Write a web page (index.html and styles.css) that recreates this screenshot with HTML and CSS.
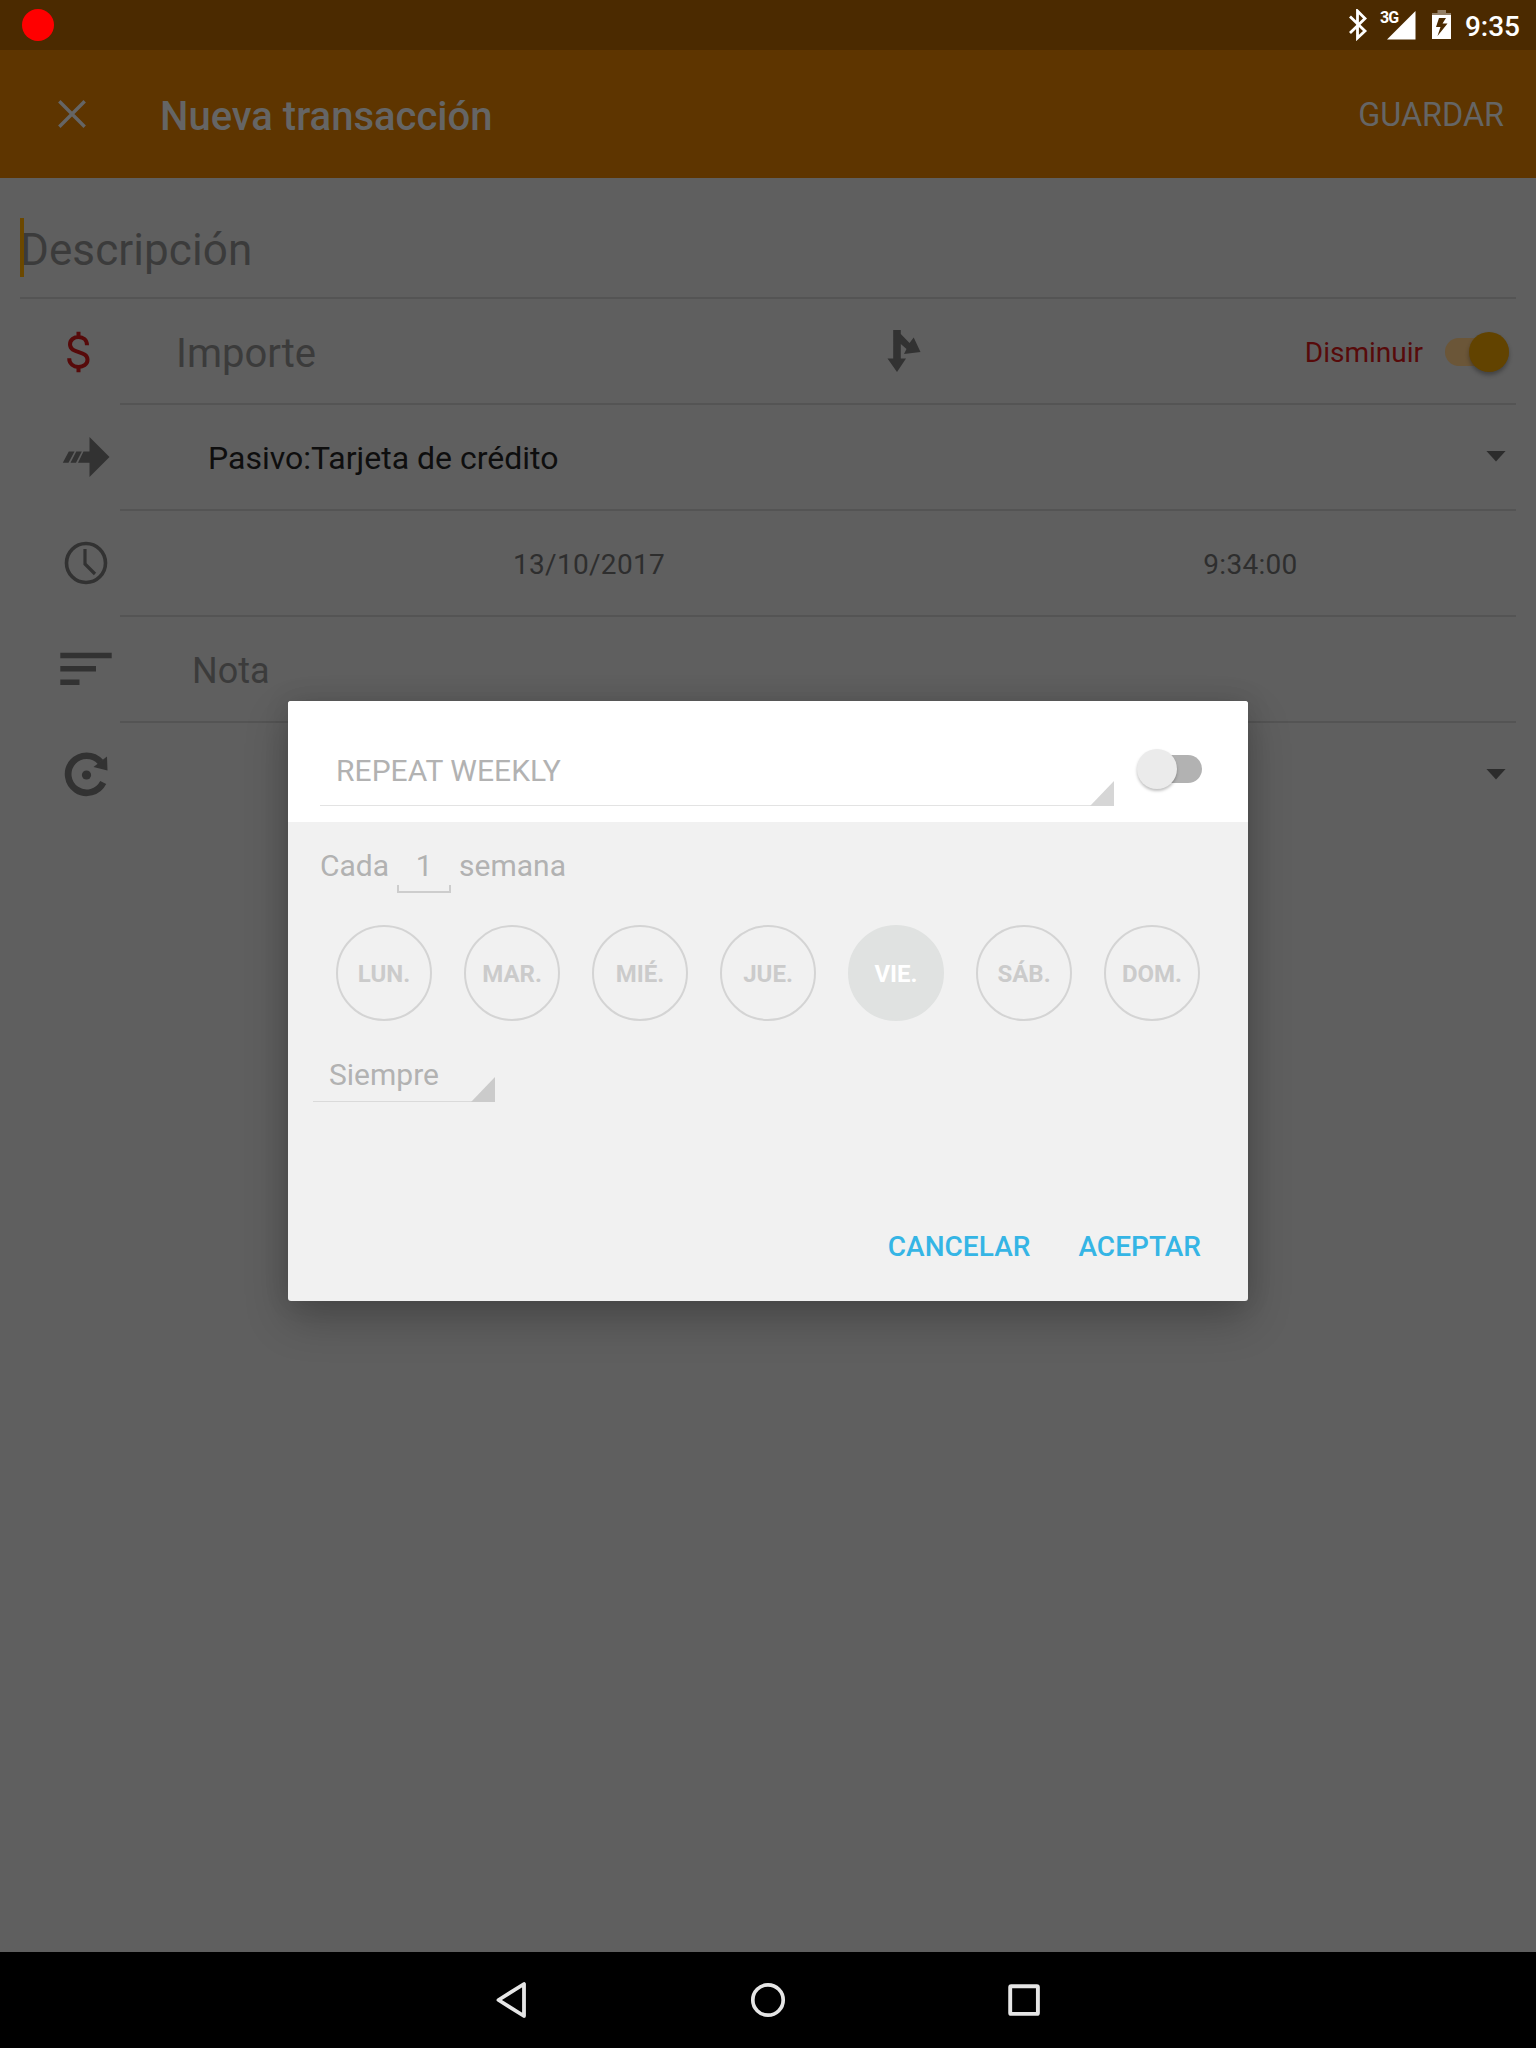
FILE: index.html
```html
<!DOCTYPE html>
<html lang="es">
<head>
<meta charset="utf-8">
<title>Nueva transacción</title>
<link rel="stylesheet" href="styles.css">
</head>
<body>
<div class="screen">
  <header class="status">
    <span class="record"></span>
    <div class="status-icons">
      <svg class="bluetooth" width="20" height="32" viewBox="0 0 20 32"><path d="M2 7.500 17 22 9.500 29V2L17 9.500 2 24" fill="none" stroke="#fff" stroke-width="2.800"/></svg>
      <div class="signal"><span class="signal-type">3G</span><svg width="29" height="29" viewBox="0 0 29 29"><path d="M28.500 0V28.500H0Z" fill="#fff"/></svg></div>
      <svg class="battery" width="20" height="30" viewBox="0 0 20 30"><path d="M5.500 0H14V3H19V6H0V3H5.500Z" fill="#937f66"/><path fill-rule="evenodd" d="M0 5H19V29H0ZM7 8 4 17H8.500L5.500 26 15.500 13.500H10.500L14 8Z" fill="#fff"/></svg>
      <span class="time">9:35</span>
    </div>
  </header>
  <div class="appbar">
    <svg class="close" width="28" height="28" viewBox="0 0 28 28"><path d="M1.300 1.300 26.700 26.700M26.700 1.300 1.300 26.700" stroke="#656565" stroke-width="3.400"/></svg>
    <h1 class="title">Nueva transacción</h1>
    <span class="save">GUARDAR</span>
  </div>
  <main class="form">
    <div class="description"><span class="caret"></span><span class="hint">Descripción</span></div>
    <div class="row">
      <div class="icon"><svg width="52" height="52" viewBox="0 0 52 52"><path d="M26 6V12M26 40V46.500M34.500 19.500C34.500 8 17.500 9 17.500 18.500C17.500 28.500 35 24 35 34C35 43.500 16.700 44 16.700 32.500" transform="translate(-7.500 .8)" fill="none" stroke="#570a0a" stroke-width="4"/></svg></div>
      <div class="cell amount">
        <span class="importe">Importe</span>
        <svg class="split" width="34" height="42" viewBox="0 0 34 42"><path d="M6.200 0H13.800V4L22.500 13 26.700 7.500 33.500 22 17 24 19.500 19 13.800 14V28.500H19L10 42 .5 28.500H6.200Z" fill="#323232"/></svg>
        <span class="decrease">Disminuir</span>
        <span class="switch on"><span class="thumb"></span></span>
      </div>
    </div>
    <div class="row">
      <div class="icon"><svg width="52" height="52" viewBox="0 0 52 52"><path d="M29.500 6 49.500 26 29.500 46V31.800H18L23.500 20.500H29.500Z" fill="#323232"/><path d="M2.800 31.800 8.800 20.500H14.500L8.500 31.800ZM10.500 31.800 16.300 20.500H21.800L16 31.800Z" fill="#323232"/></svg></div>
      <div class="cell account"><span>Pasivo:Tarjeta de crédito</span><span class="arrow"></span></div>
    </div>
    <div class="row">
      <div class="icon"><svg width="52" height="52" viewBox="0 0 52 52"><circle cx="26" cy="26" r="19.500" fill="none" stroke="#323232" stroke-width="3.600"/><path d="M25 12V27L35 37" fill="none" stroke="#323232" stroke-width="3.200"/></svg></div>
      <div class="cell when"><span class="date">13/10/2017</span><span class="hour">9:34:00</span></div>
    </div>
    <div class="row">
      <div class="icon"><svg width="52" height="52" viewBox="0 0 52 52"><path d="M0.300 9.800H51.700V15.200H0.300ZM0.300 23H36V28.500H0.300ZM0.300 36.500H19.500V42H0.300Z" fill="#323232"/></svg></div>
      <div class="cell note">Nota</div>
    </div>
    <div class="row last">
      <div class="icon"><svg width="52" height="52" viewBox="0 0 52 52"><circle cx="26.500" cy="26" r="4.600" fill="#323232"/><path d="M43.200 33.500A18.500 18.500 0 1 1 40.500 13" fill="none" stroke="#323232" stroke-width="6.700"/><path d="M47 7.500 47.500 21.500 33.500 18Z" fill="#323232"/></svg></div>
      <div class="cell account"><span></span><span class="arrow"></span></div>
    </div>
  </main>
  <nav class="navbar">
    <svg width="36" height="40" viewBox="0 0 36 40"><path d="M30 4V36L4.500 20Z" fill="none" stroke="#e6e6e6" stroke-width="3.800" stroke-linejoin="round"/></svg>
    <svg width="36" height="40" viewBox="0 0 36 40"><circle cx="18" cy="20" r="15.200" fill="none" stroke="#e6e6e6" stroke-width="3.700"/></svg>
    <svg width="36" height="40" viewBox="0 0 36 40"><rect x="4.200" y="6.200" width="27.700" height="27.700" rx="1" fill="none" stroke="#e6e6e6" stroke-width="3.900"/></svg>
  </nav>
  <section class="dialog">
    <div class="dialog-head">
      <div class="spinner freq">REPEAT WEEKLY</div>
      <span class="switch off"><span class="thumb"></span></span>
    </div>
    <div class="dialog-body">
      <div class="every"><span>Cada</span><span class="count">1</span><span>semana</span></div>
      <div class="days">
        <span class="day">LUN.</span><span class="day">MAR.</span><span class="day">MIÉ.</span><span class="day">JUE.</span><span class="day selected">VIE.</span><span class="day">SÁB.</span><span class="day">DOM.</span>
      </div>
      <div class="spinner until">Siempre</div>
      <div class="actions"><span>CANCELAR</span><span>ACEPTAR</span></div>
    </div>
  </section>
</div>
</body>
</html>
```
FILE: styles.css
```css
* { box-sizing: border-box; }
body { margin: 0; font-family: Roboto, "Liberation Sans", sans-serif; background: #5f5f5f; }
svg { display: block; flex: none; }
.screen { position: relative; width: 1536px; height: 2048px; display: flex; flex-direction: column; overflow: hidden; background: #5f5f5f; }

.status { height: 50px; background: #4b2a00; display: flex; justify-content: space-between; padding: 0 16px 0 22px; }
.record { width: 32px; height: 32px; margin-top: 9px; border-radius: 50%; background: #f00; }
.status-icons { display: flex; align-items: flex-start; color: #fff; }
.bluetooth { margin-top: 9px; }
.signal { display: flex; position: relative; padding: 11px 0 0 19px; }
.signal-type { position: absolute; left: 12px; top: 9px; font-size: 16px; line-height: 18px; font-weight: 700; letter-spacing: -.7px; }
.battery { margin: 10px 0 0 16px; }
.time { margin-left: 13px; font-size: 28px; font-weight: 500; line-height: 53px; }

.appbar { height: 128px; background: #5e3500; color: #656565; display: flex; align-items: center; padding: 0 32px 0 58px; }
.title { margin: 5px 0 0 74px; flex: 1; font-size: 40px; font-weight: 500; line-height: 48px; }
.save { font-size: 32px; line-height: 40px; margin-top: 2px; letter-spacing: -.02px; font-size: 32.400px; }

.form { flex: 1; padding: 0 20px; }
.description { height: 121px; border-bottom: 2px solid #545454; display: flex; padding-top: 41px; position: relative; }
.caret { position: absolute; left: 0; top: 40px; width: 4px; height: 59px; background: #6b4800; }
.hint { font-size: 44px; line-height: 62px; color: #3b3b3b; letter-spacing: .08px; }
.row { height: 106px; display: flex; }
.icon { width: 100px; padding: 26px 0 0 40px; }
.cell { flex: 1; border-bottom: 2px solid #545454; display: flex; align-items: center; }
.last .cell { border-color: transparent; }
.amount { padding-left: 56px; }
.importe { width: 711px; font-size: 40px; color: #3b3b3b; padding-top: 4px; }
.decrease { margin-left: auto; font-size: 28px; color: #570a0a; padding-top: 2px; }
.switch { position: relative; display: block; height: 28px; border-radius: 14px; flex: none; }
.switch .thumb { position: absolute; top: -6px; width: 40px; height: 40px; border-radius: 50%; }
.on { width: 64px; margin: 1px 7px 0 22px; background: #6b5638; }
.on .thumb { right: 0; background: #624300; box-shadow: 0 3px 4px rgba(0,0,0,.3); }
.account { justify-content: space-between; padding: 2px 10px 0 88px; font-size: 32px; color: #0e0e0e; }
.arrow { width: 20px; height: 11px; margin-bottom: 4px; background: #2c2c2c; clip-path: polygon(0 0, 100% 0, 50% 100%); }
.when { font-size: 28px; color: #2e2e2e; padding: 2px 73px 0 0; letter-spacing: .3px; }
.date { width: 938px; text-align: center; }
.hour { flex: 1; text-align: center; }
.note { padding: 4px 0 0 72px; font-size: 36px; color: #3b3b3b; }

.navbar { height: 96px; background: #000; display: flex; justify-content: center; align-items: center; gap: 220px; }

.dialog { position: absolute; left: 288px; top: 701px; width: 960px; height: 600px; border-radius: 3px; overflow: hidden; background: #f1f1f1; box-shadow: 0 18px 44px rgba(0,0,0,.24), 0 0 26px rgba(0,0,0,.1); display: flex; flex-direction: column; font-size: 30px; color: #b2b2b2; }
.dialog-head { height: 121px; background: #fff; padding: 34px 46px 0 32px; display: flex; justify-content: space-between; }
.spinner { position: relative; border-bottom: 1px solid #e3e3e3; }
.spinner::after { content: ""; position: absolute; right: 0; bottom: -1px; width: 24px; height: 25px; background: #d6d6d6; clip-path: polygon(100% 0, 100% 100%, 0 100%); }
.freq { width: 794px; height: 71px; padding-left: 16px; line-height: 71px; letter-spacing: .05px; }
.off { width: 64px; margin-top: 20px; background: #b2b2b2; }
.off .thumb { left: -1px; background: #ebebeb; box-shadow: 0 2px 3px rgba(0,0,0,.25); }
.dialog-body { flex: 1; padding: 20px 32px 0; display: flex; flex-direction: column; }
.every { display: flex; line-height: 48px; height: 51px; }
.count { width: 54px; height: 51px; margin: 0 8px; text-align: center; background: linear-gradient(#cdcdcd,#cdcdcd) 0 100%/100% 2px no-repeat, linear-gradient(#cdcdcd,#cdcdcd) 0 100%/2px 8px no-repeat, linear-gradient(#cdcdcd,#cdcdcd) 100% 100%/2px 8px no-repeat; }
.days { display: flex; gap: 32px; padding: 32px 16px 0; }
.day { width: 96px; height: 96px; border: 2px solid #d4d4d4; border-radius: 50%; text-align: center; line-height: 94px; font-size: 24px; font-weight: 700; color: #cbcbcb; }
.selected { background: #e0e2e1; border-color: #e0e2e1; color: #fff; }
.until { width: 182px; height: 55px; margin: 26px 0 0 -7px; padding-left: 16px; line-height: 56px; border-color: #dadada; }
.until::after { background: #cbcbcb; }
.actions { display: flex; justify-content: flex-end; gap: 48px; margin-top: 120px; padding-right: 15px; font-size: 28px; line-height: 50px; font-weight: 500; letter-spacing: .04px; color: #35b5e5; }
```
